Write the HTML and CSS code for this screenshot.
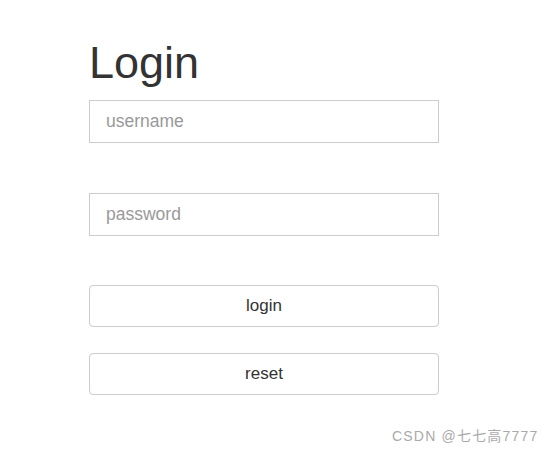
FILE: index.html
```html
<html lang="en">
<head>
  <meta charset="UTF-8" />
  <title>Login</title>
  <meta content="width=device-width, initial-scale=1" name="viewport" />
  <link rel="stylesheet" href="styles.css">
</head>
<body>

<div class="container">
  <h1 class="title">Login</h1>
  <form class="login_form">
    <input type="text" class="field" name="username" placeholder="username">
    <input type="password" class="field" name="password" placeholder="password">
    <button type="submit" class="btn btn_login">login</button>
    <button type="reset" class="btn btn_reset">reset</button>
  </form>
</div>

<div class="watermark">CSDN @七七高7777</div>

</body>
</html>
```

FILE: styles.css
```css
*{box-sizing:border-box; margin:0; padding:0;}
body{width:100%; height:100%; background-color:#fff; font-family:"Liberation Sans", Arial, "Noto Sans CJK SC", sans-serif; color:#333;}
.container{width:350px; margin-left:89px; padding-top:37px;}
.title{font-size:45px; font-weight:normal; line-height:52px; color:#333; margin-bottom:11px;}
.login_form{display:flex; flex-direction:column;}
.field{height:43px; width:100%; border:1px solid #ccc; padding:0 16px; font-family:inherit; font-size:17.5px; color:#555; outline:none;}
.field::placeholder{color:#999;}
.field + .field{margin-top:50px;}
.btn{height:42px; width:100%; border:1px solid #ccc; border-radius:4px; background-color:#fff; font-family:inherit; font-size:17px; color:#333;}
.btn_login{margin-top:49px;}
.btn_reset{margin-top:26px;}
.watermark{position:absolute; left:392px; top:425px; font-size:14px; letter-spacing:1.2px; color:#aaa; font-family:"Liberation Sans", "Noto Sans CJK SC", sans-serif;}
```
